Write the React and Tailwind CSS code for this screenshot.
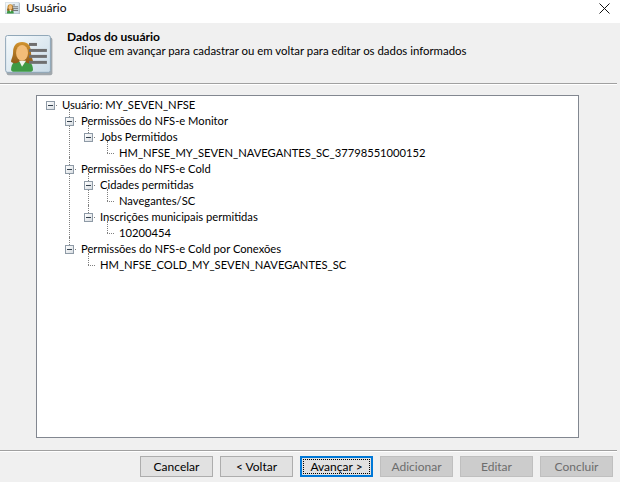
import React from "react";

const tree = {
  label: "Usuário: MY_SEVEN_NFSE",
  children: [
    {
      label: "Permissões do NFS-e Monitor",
      children: [
        {
          label: "Jobs Permitidos",
          children: [{ label: "HM_NFSE_MY_SEVEN_NAVEGANTES_SC_37798551000152" }],
        },
      ],
    },
    {
      label: "Permissões do NFS-e Cold",
      children: [
        { label: "Cidades permitidas", children: [{ label: "Navegantes/SC" }] },
        { label: "Inscrições municipais permitidas", children: [{ label: "10200454" }] },
      ],
    },
    {
      label: "Permissões do NFS-e Cold por Conexões",
      children: [{ label: "HM_NFSE_COLD_MY_SEVEN_NAVEGANTES_SC" }],
    },
  ],
};

const CardIcon = ({ size, id }) => (
  <svg width={size} height={size * 0.85} viewBox="0 0 48 41">
    <defs>
      <linearGradient id={id + "card"} x1="0" y1="0" x2="1" y2="1">
        <stop offset="0" stopColor="#f6fafc" />
        <stop offset="1" stopColor="#c9dbe7" />
      </linearGradient>
      <linearGradient id={id + "hair"} x1="0" y1="0" x2="0" y2="1">
        <stop offset="0" stopColor="#d2942f" />
        <stop offset="1" stopColor="#8f5a18" />
      </linearGradient>
    </defs>
    <rect x="1.5" y="2.5" width="46" height="38" rx="2" fill="#5f6b75" opacity="0.55" />
    <rect x="0.5" y="0.5" width="45" height="37" rx="2" fill={"url(#" + id + "card)"} stroke="#8fa6b8" />
    <path d="M6 35c0-7 4-10 11-10s11 3 11 10c0 1-1 2-2 2H8c-1 0-2-1-2-2z" fill="#3f9a45" />
    <path d="M17 7c-6 0-9 4-9 10 0 5-2 7-2 10 2 2 6 2 8 0h6c2 2 6 2 8 0 0-3-2-5-2-10 0-6-3-10-9-10z" fill={"url(#" + id + "hair)"} />
    <ellipse cx="17" cy="18" rx="6" ry="8" fill="#f3bd78" />
    <path d="M14 26l3 6 4-6z" fill="#f2f6ef" />
    <rect x="24" y="8" width="8" height="3" fill="#6f6f6f" />
    <rect x="24" y="14" width="18" height="3" fill="#6f6f6f" />
    <rect x="24" y="20" width="18" height="3" fill="#6f6f6f" />
    <rect x="24" y="26" width="18" height="3" fill="#6f6f6f" />
  </svg>
);

const TreeNode = ({ node, isChild, isLast }) => {
  const kids = node.children || [];
  return (
    <li className="relative">
      {isChild && (
        <span
          className={
            "absolute left-[4px] top-[-4px] border-l border-dotted border-[#808080] " +
            (isLast ? "h-[12px]" : "h-[calc(100%+4px)]")
          }
        />
      )}
      <div className="relative flex h-[16.05px] items-center">
        <span className="absolute left-[4px] top-1/2 w-[7px] border-t border-dotted border-[#808080]" />
        {kids.length > 0 ? (
          <span className="relative flex h-[9px] w-[9px] items-center justify-center border border-[#8e9aa6] bg-gradient-to-br from-white to-[#d8dde2]">
            <span className="h-px w-[5px] bg-[#33404d]" />
          </span>
        ) : (
          <span className="h-[9px] w-[9px]" />
        )}
        <span className="ml-[7px] whitespace-nowrap text-[11.2px]">{node.label}</span>
      </div>
      {kids.length > 0 && (
        <ul className="pl-[19px]">
          {kids.map((k, i) => (
            <TreeNode key={k.label} node={k} isChild isLast={i === kids.length - 1} />
          ))}
        </ul>
      )}
    </li>
  );
};

const Button = ({ children, disabled, focused }) => {
  if (focused) {
    return (
      <button className="h-[21px] w-[73px] border-2 border-[#0078d7] bg-[#e1e1e1] p-px text-black">
        <span className="flex h-full w-full items-center justify-center border border-dotted border-black">
          {children}
        </span>
      </button>
    );
  }
  return (
    <button
      className={
        "h-[21px] w-[73px] border " +
        (disabled
          ? "border-[#bfbfbf] bg-[#cccccc] text-[#6d6d6d]"
          : "border-[#adadad] bg-[#e1e1e1] text-black")
      }
    >
      {children}
    </button>
  );
};

export default function App() {
  return (
    <div className="flex h-[482px] w-[620px] flex-col overflow-hidden bg-[#f0f0f0] font-['Lato',Arial,sans-serif] text-[12px] text-black">
      <div className="flex h-[23px] items-center bg-white pb-[7px] pl-[5px]">
        <CardIcon size={15} id="small" />
        <span className="ml-[6px]">Usuário</span>
        <svg className="ml-auto mr-[10px]" width="11" height="11" viewBox="0 0 11 11">
          <path d="M0.5 0.5l10 10M10.5 0.5l-10 10" stroke="#111" fill="none" />
        </svg>
      </div>

      <div className="flex h-[60px] items-start pl-[5px] pt-[12px]">
        <CardIcon size={48} id="big" />
        <div className="ml-[14px] mt-[-5px] leading-[14px]">
          <div className="font-bold">Dados do usuário</div>
          <div className="pl-[7px] text-[11.4px]">Clique em avançar para cadastrar ou em voltar para editar os dados informados</div>
        </div>
      </div>
      <div className="mr-[3px] h-[2px] border-t border-[#a0a0a0] bg-white" />

      <div className="px-[36px] pt-[10px] pr-[41px]">
        <div className="h-[343px] border border-[#828790] bg-white pl-[9px] pt-[1px]">
          <ul>
            <TreeNode node={tree} />
          </ul>
        </div>
      </div>

      <div className="mr-[3px] mt-[12px] h-[2px] border-t border-[#a0a0a0] bg-white" />
      <div className="flex justify-end gap-[7px] pr-[7px] pt-[4px]">
        <Button>Cancelar</Button>
        <Button>&lt; Voltar</Button>
        <Button focused>Avançar &gt;</Button>
        <Button disabled>Adicionar</Button>
        <Button disabled>Editar</Button>
        <Button disabled>Concluir</Button>
      </div>
    </div>
  );
}
